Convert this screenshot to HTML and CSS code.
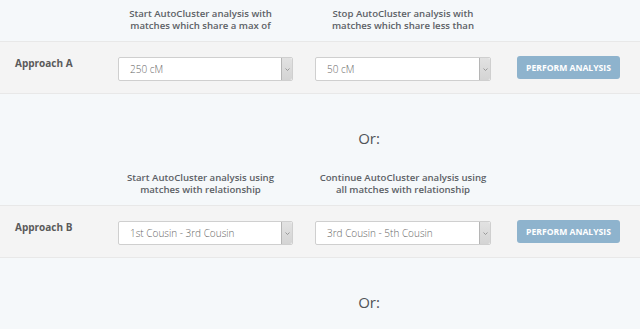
FILE: index.html
```html
<!DOCTYPE html>
<html lang="en">

<head>
    <meta charset="UTF-8">
    <meta name="viewport" content="width=device-width, initial-scale=1.0">
    <title>AutoCluster Approaches</title>

    <link rel="stylesheet" href="styles.css">
</head>

<body>

    <div class="grid header">
        <p class="col1">Start AutoCluster analysis with<br>matches which share a max of</p>
        <p class="col2">Stop AutoCluster analysis with<br>matches which share less than</p>
    </div>

    <div class="grid approach">
        <div class="label">Approach A</div>
        <div class="select">
            <span>250 cM</span>
            <span class="arrow"><svg width="5" height="3" viewBox="0 0 5 3"><path d="M0.5 0.5 L2.5 2.5 L4.5 0.5" fill="none" stroke="#888" stroke-width="0.8"/></svg></span>
        </div>
        <div class="select">
            <span>50 cM</span>
            <span class="arrow"><svg width="5" height="3" viewBox="0 0 5 3"><path d="M0.5 0.5 L2.5 2.5 L4.5 0.5" fill="none" stroke="#888" stroke-width="0.8"/></svg></span>
        </div>
        <button>Perform Analysis</button>
    </div>

    <div class="grid or-row">
        <div class="or">Or:</div>
    </div>

    <div class="grid header">
        <p class="col1">Start AutoCluster analysis using<br>matches with relationship</p>
        <p class="col2">Continue AutoCluster analysis using<br>all matches with relationship</p>
    </div>

    <div class="grid approach">
        <div class="label">Approach B</div>
        <div class="select">
            <span>1st Cousin - 3rd Cousin</span>
            <span class="arrow"><svg width="5" height="3" viewBox="0 0 5 3"><path d="M0.5 0.5 L2.5 2.5 L4.5 0.5" fill="none" stroke="#888" stroke-width="0.8"/></svg></span>
        </div>
        <div class="select">
            <span>3rd Cousin - 5th Cousin</span>
            <span class="arrow"><svg width="5" height="3" viewBox="0 0 5 3"><path d="M0.5 0.5 L2.5 2.5 L4.5 0.5" fill="none" stroke="#888" stroke-width="0.8"/></svg></span>
        </div>
        <button>Perform Analysis</button>
    </div>

    <div class="grid or-row">
        <div class="or">Or:</div>
    </div>

</body>

</html>
```

FILE: styles.css
```css
body {
    font-family: "Open Sans", Arial, sans-serif;
    background-color: #f5f8fa;
    color: #555;
    margin: 0;
    padding: 0;
}

.grid {
    display: grid;
    grid-template-columns: 118px 175px 22px 176px 26px 103px;
}

.header {
    height: 41px;
    box-sizing: border-box;
    padding-top: 8px;
}

.header p {
    margin: 0;
    font-size: 9.6px;
    line-height: 11.5px;
    font-weight: 600;
    text-align: center;
    color: #5c6166;
    white-space: nowrap;
}

.header .col1 {
    grid-column: 2;
    justify-self: center;
    margin-left: -10px;
}

.header .col2 {
    grid-column: 4;
    justify-self: center;
}

.approach {
    height: 53px;
    box-sizing: border-box;
    background-color: #f4f4f4;
    border-top: 1px solid #e8e8e8;
    border-bottom: 1px solid #e8e8e8;
    align-items: start;
    padding-top: 14px;
}

.label {
    padding-left: 15px;
    font-size: 10px;
    font-weight: 700;
    line-height: 14px;
    color: #5a5a5a;
}

.select {
    height: 24px;
    margin-top: 1px;
    box-sizing: border-box;
    background-color: #fff;
    border: 1px solid #cfcfcf;
    border-radius: 2px;
    display: flex;
    align-items: center;
    justify-content: space-between;
    font-size: 10px;
    font-weight: 300;
    color: #666;
    padding-left: 11px;
}

.approach .select:nth-child(2) {
    grid-column: 2;
}

.approach .select:nth-child(3) {
    grid-column: 4;
}

.arrow {
    width: 11px;
    height: 22px;
    box-sizing: border-box;
    background: linear-gradient(to bottom, #e2e2e2, #d4d4d4);
    border-left: 1px solid #b5b5b5;
    border-radius: 0 2px 2px 0;
    display: flex;
    align-items: center;
    justify-content: center;
}

button {
    grid-column: 6;
    height: 23px;
    background-color: #8eb3cd;
    color: #fff;
    border: none;
    border-radius: 3px;
    font-family: "Open Sans", Arial, sans-serif;
    font-size: 8.6px;
    font-weight: 700;
    text-transform: uppercase;
    padding: 0;
    cursor: pointer;
}

.or-row {
    height: 70px;
    box-sizing: border-box;
    padding-top: 34px;
}

.or {
    grid-column: 2 / 7;
    text-align: center;
    font-size: 15px;
    line-height: 20px;
    font-weight: 500;
    color: #505458;
}
```
